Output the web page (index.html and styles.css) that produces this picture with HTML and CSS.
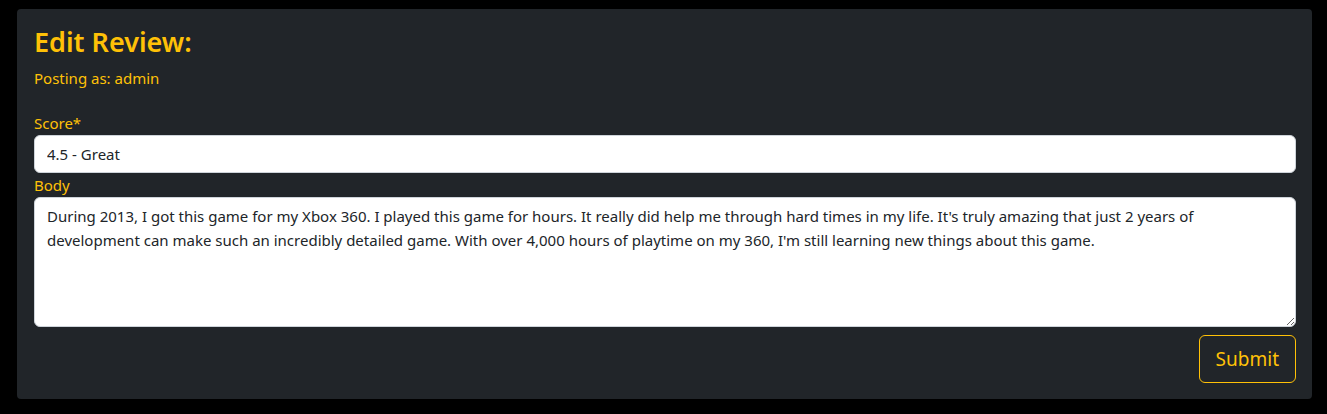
FILE: index.html
```html
<!DOCTYPE html>
<html lang="en">
<head>
<meta charset="utf-8">
<title>Edit Review</title>
<link rel="stylesheet" href="styles.css">
</head>
<body>
<div class="card">
  <h3 class="title">Edit Review:</h3>
  <p class="posting">Posting as: admin</p>
  <form class="form">
    <label class="label" for="score">Score*</label>
    <select id="score" class="control select">
      <option>4.5 - Great</option>
    </select>
    <label class="label" for="body">Body</label>
    <textarea id="body" class="control textarea">During 2013, I got this game for my Xbox 360. I played this game for hours. It really did help me through hard times in my life. It's truly amazing that just 2 years of development can make such an incredibly detailed game. With over 4,000 hours of playtime on my 360, I'm still learning new things about this game.</textarea>
    <div class="actions">
      <button type="button" class="btn">Submit</button>
    </div>
  </form>
</div>
</body>
</html>
```

FILE: styles.css
```css
* { box-sizing: border-box; }
html, body { margin: 0; background: #000; }
body {
  padding: 9px 15px 15px 17px;
  font-family: "Noto Sans", "Open Sans", sans-serif;
  font-size: 15px;
  line-height: 24px;
  color: #ffc107;
}
.card {
  background: #212529;
  border-radius: 4px;
  padding: 16px 16px 16px 17px;
  height: 390px;
}
.title {
  margin: 0 0 6px 0;
  font-size: 27px;
  font-weight: 600;
  line-height: 34.5px;
  color: #ffc107;
}
.posting {
  margin: 0 0 21px 0;
  color: #ffc107;
}
.form { display: flex; flex-direction: column; }
.label { display: block; color: #ffc107; }
.control {
  display: block;
  width: 100%;
  font: inherit;
  color: #212529;
  background: #fff;
  border: 1px solid #ced4da;
  border-radius: 6px;
  padding: 6px 12px;
}
.select {
  height: 38px;
  appearance: none;
  -webkit-appearance: none;
}
.textarea {
  height: 130px;
  resize: vertical;
  line-height: 24px;
}
.actions {
  display: flex;
  justify-content: flex-end;
  margin-top: 8px;
}
.btn {
  font: inherit;
  font-size: 19px;
  line-height: 30px;
  padding: 8px 16px;
  color: #ffc107;
  background: transparent;
  border: 1px solid #ffc107;
  border-radius: 6px;
  cursor: pointer;
}
```
